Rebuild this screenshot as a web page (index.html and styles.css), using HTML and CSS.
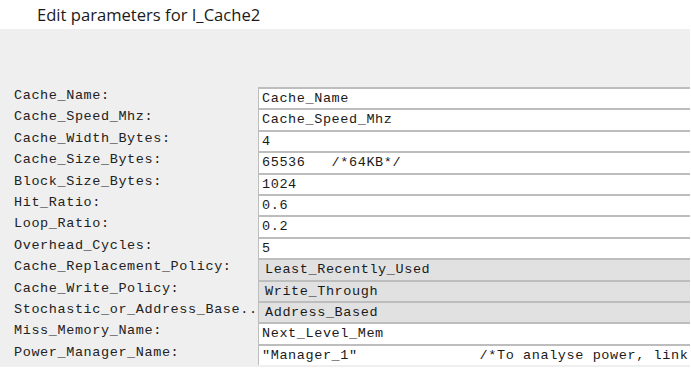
FILE: index.html
```html
<!DOCTYPE html>
<html lang="en">
<head>
    <meta charset="UTF-8">
    <title>Edit parameters for I_Cache2</title>
    <link rel="stylesheet" href="styles.css">
</head>
<body>
    <div class="header">Edit parameters for I_Cache2</div>
    <div class="panel">
        <div class="params">
            <div class="label">Cache_Name:</div>
            <div class="field">Cache_Name</div>
            <div class="label">Cache_Speed_Mhz:</div>
            <div class="field">Cache_Speed_Mhz</div>
            <div class="label">Cache_Width_Bytes:</div>
            <div class="field">4</div>
            <div class="label">Cache_Size_Bytes:</div>
            <div class="field">65536   /*64KB*/</div>
            <div class="label">Block_Size_Bytes:</div>
            <div class="field">1024</div>
            <div class="label">Hit_Ratio:</div>
            <div class="field">0.6</div>
            <div class="label">Loop_Ratio:</div>
            <div class="field">0.2</div>
            <div class="label">Overhead_Cycles:</div>
            <div class="field">5</div>
            <div class="label">Cache_Replacement_Policy:</div>
            <div class="field combo">Least_Recently_Used</div>
            <div class="label">Cache_Write_Policy:</div>
            <div class="field combo">Write_Through</div>
            <div class="label">Stochastic_or_Address_Base..</div>
            <div class="field combo">Address_Based</div>
            <div class="label">Miss_Memory_Name:</div>
            <div class="field">Next_Level_Mem</div>
            <div class="label">Power_Manager_Name:</div>
            <div class="field last">"Manager_1"              /*To analyse power, link</div>
        </div>
    </div>
</body>
</html>
```

FILE: styles.css
```css
* { margin: 0; padding: 0; box-sizing: border-box; }
body {
    background: #fff;
    color: #1e1e1e;
    overflow: hidden;
}
.header {
    height: 29px;
    padding-left: 37px;
    font-family: 'Open Sans', sans-serif;
    font-size: 16.6px;
    line-height: 29px;
    color: #1a1a1a;
}
.panel {
    background: #efefef;
    margin-right: 1px;
    padding-top: 58px;
    height: 338px;
}
.params {
    display: grid;
    grid-template-columns: 244px 1fr;
    grid-auto-rows: 21.4px;
    padding-left: 14px;
    font-family: 'Liberation Mono', monospace;
    font-size: 13.5px;
    letter-spacing: 0.6px;
    overflow: hidden;
}
.label {
    line-height: 17px;
    color: #222;
    white-space: pre;
}
.field {
    background: #fff;
    border-top: 2px solid #bdbdbd;
    border-left: 1px solid #bdbdbd;
    padding-left: 3px;
    line-height: 19px;
    white-space: pre;
    overflow: hidden;
    color: #1a1a1a;
}
.field.combo {
    background: #e1e1e1;
    padding-left: 6px;
}
.field.last { border-bottom: 2px solid #bdbdbd; height: 23.4px; }
```
